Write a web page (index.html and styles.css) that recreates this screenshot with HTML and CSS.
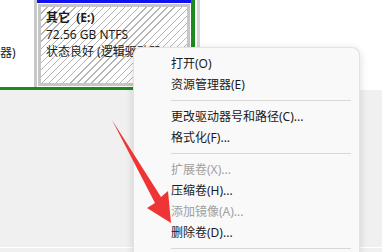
FILE: index.html
```html
<!DOCTYPE html>
<html lang="zh-CN">
<head>
    <meta charset="UTF-8">
    <title>磁盘管理</title>
    <link rel="stylesheet" href="styles.css">
</head>
<body>
    <div class="top">
        <div class="disk">
            <div class="disk-label">器)</div>
            <div class="part-col">
                <div class="part-bar"></div>
                <div class="part-box">
                    <div class="part-name">其它 &nbsp;(E:)</div>
                    <div>72.56 GB NTFS</div>
                    <div>状态良好 (逻辑驱动器)</div>
                </div>
            </div>
        </div>
        <div class="disk-gap"></div>
        <div class="disk-edge"></div>
    </div>
    <div class="bottom-line"></div>

    <div class="menu">
        <div class="item">打开(O)</div>
        <div class="item">资源管理器(E)</div>
        <div class="sep"></div>
        <div class="item">更改驱动器号和路径(C)...</div>
        <div class="item">格式化(F)...</div>
        <div class="sep"></div>
        <div class="item disabled">扩展卷(X)...</div>
        <div class="item">压缩卷(H)...</div>
        <div class="item disabled">添加镜像(A)...</div>
        <div class="item">删除卷(D)...</div>
        <div class="sep"></div>
    </div>

    <svg class="arrow" width="80" height="120" viewBox="100 115 80 120">
        <polygon points="112,120 161,197 168,191 171,223 147,208 155,203" fill="#ee3434"/>
    </svg>
</body>
</html>
```

FILE: styles.css
```css
body {
    margin: 0;
    width: 382px;
    height: 252px;
    overflow: hidden;
    position: relative;
    background-color: #f0f0f0;
    font-family: "Noto Sans", "Noto Sans CJK SC", sans-serif;
    font-size: 12px;
    color: #1a1a1a;
}
.top {
    display: flex;
    height: 90px;
    background: white;
}
.disk {
    display: flex;
    width: 191px;
    height: 87px;
    border-right: 4px solid #1d8a1d;
    border-bottom: 3px solid #1d8a1d;
}
.disk-gap {
    width: 2px;
}
.disk-edge {
    width: 3px;
    height: 88px;
    background: #d6d6d6;
}
.disk-label {
    width: 34px;
    border-right: 3px solid #c8c8c8;
    padding-top: 43px;
    white-space: nowrap;
}
.part-col {
    flex: 1;
    display: flex;
    flex-direction: column;
}
.part-bar {
    height: 3px;
    background: #1010f0;
    margin-bottom: 1px;
}
.part-box {
    flex: 1;
    border: 3px solid #c6c6c6;
    margin: 0 1px 1px 1px;
    padding: 2px 3px 0 5px;
    line-height: 17px;
    white-space: nowrap;
    overflow: hidden;
    background: repeating-linear-gradient(135deg, #ffffff 0 4px, #b4b4b4 4px 5px);
}
.part-name {
    font-weight: bold;
}
.bottom-line {
    height: 1px;
    margin-top: 157px;
    background: #ffffff;
}
.menu {
    position: absolute;
    left: 133px;
    top: 47px;
    width: 227px;
    height: 205px;
    box-sizing: border-box;
    padding: 5px 8px 0 37px;
    background: #f9f9f9;
    border: 1px solid #e2e2e2;
    border-bottom: none;
    border-radius: 8px 8px 0 0;
    box-shadow: 0 2px 8px rgba(0,0,0,0.14);
    overflow: hidden;
}
.item {
    height: 21px;
    line-height: 21px;
    white-space: nowrap;
}
.disabled {
    color: #a0a0a0;
}
.sep {
    height: 1px;
    margin: 5px 0;
    background: #d8d8d8;
}
.arrow {
    position: absolute;
    left: 100px;
    top: 115px;
}
```
